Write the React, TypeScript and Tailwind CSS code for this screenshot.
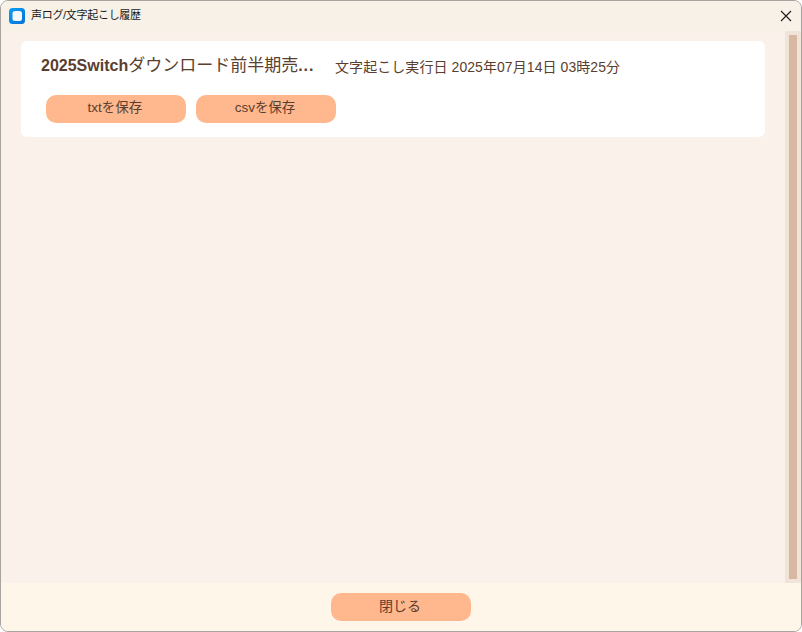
const FONT = "font-['Liberation_Sans','Noto_Sans_CJK_JP',sans-serif]";

function SaveButton({ label }: { label: string }) {
  return (
    <button className="flex h-[28px] w-[140px] items-center justify-center rounded-[10px] bg-[#ffb88e] pb-[2px] pr-[2px] text-[13.5px] text-[#5a3e2e]">
      {label}
    </button>
  );
}

function AppIcon() {
  return (
    <svg width="16" height="16" viewBox="0 0 16 16" aria-hidden>
      <defs>
        <linearGradient id="app-icon" x1="0" y1="0" x2="1" y2="1">
          <stop offset="0" stopColor="#0aa0f5" />
          <stop offset="1" stopColor="#0570d8" />
        </linearGradient>
      </defs>
      <rect width="16" height="16" rx="3.5" fill="url(#app-icon)" />
      <rect x="3.5" y="3" width="9.5" height="10" rx="2.5" fill="#f4f8fb" />
    </svg>
  );
}

export default function App() {
  return (
    <div className={`h-[632px] w-[802px] overflow-hidden bg-white ${FONT}`}>
      <div className="flex h-full w-full flex-col overflow-hidden rounded-[8px] border border-[#a8a4a0] bg-[#f9f1ea]">
        {/* title bar */}
        <div className="flex h-[30px] shrink-0 items-center bg-[#f8f1e8] pl-[8px] pr-[9px]">
          <AppIcon />
          <span className="mb-[1px] ml-[6px] text-[11px] tracking-[-0.3px] text-[#1a1a1a]">声ログ/文字起こし履歴</span>
          <svg className="ml-auto" width="12" height="12" viewBox="0 0 12 12" fill="none" stroke="#1a1a1a" strokeWidth="1.1" aria-hidden>
            <path d="M1 1 L11 11 M11 1 L1 11" />
          </svg>
        </div>

        {/* list + scrollbar */}
        <div className="flex min-h-0 flex-1">
          <div className="min-w-0 flex-1 pl-[20px] pr-[20px] pt-[10px]">
            <div className="h-[96px] rounded-[6px] bg-white pl-[20px] pt-[12px]">
              <div className="flex h-[24px] items-center">
                <span className="mt-[1px] w-[294px] shrink-0 text-[16px] text-[#5a3e2e]">
                  <span className="font-bold">2025Switch</span>
                  <span className="text-[17px]">ダウンロード前半期売</span>
                  <span className="font-bold tracking-[1px]">...</span>
                </span>
                <span className="mt-[4px] text-[14px] tracking-[0.07px] text-[#5a3e2e]">文字起こし実行日 2025年07月14日 03時25分</span>
              </div>
              <div className="mt-[18px] flex gap-[10px] pl-[5px]">
                <SaveButton label="txtを保存" />
                <SaveButton label="csvを保存" />
              </div>
            </div>
          </div>
          <div className="w-[16px] shrink-0 bg-[#f0e3d8] px-[4px] py-[4px]">
            <div className="h-full w-[8px] bg-[#d9b8a3]" />
          </div>
        </div>

        {/* footer */}
        <div className="flex h-[48px] shrink-0 items-start justify-center bg-[#fff6ea] pt-[10px]">
          <button className="flex h-[28px] w-[140px] items-center justify-center rounded-[10px] bg-[#ffb88e] pb-[2px] pr-[2px] text-[14px] text-[#5a3e2e]">
            閉じる
          </button>
        </div>
      </div>
    </div>
  );
}
